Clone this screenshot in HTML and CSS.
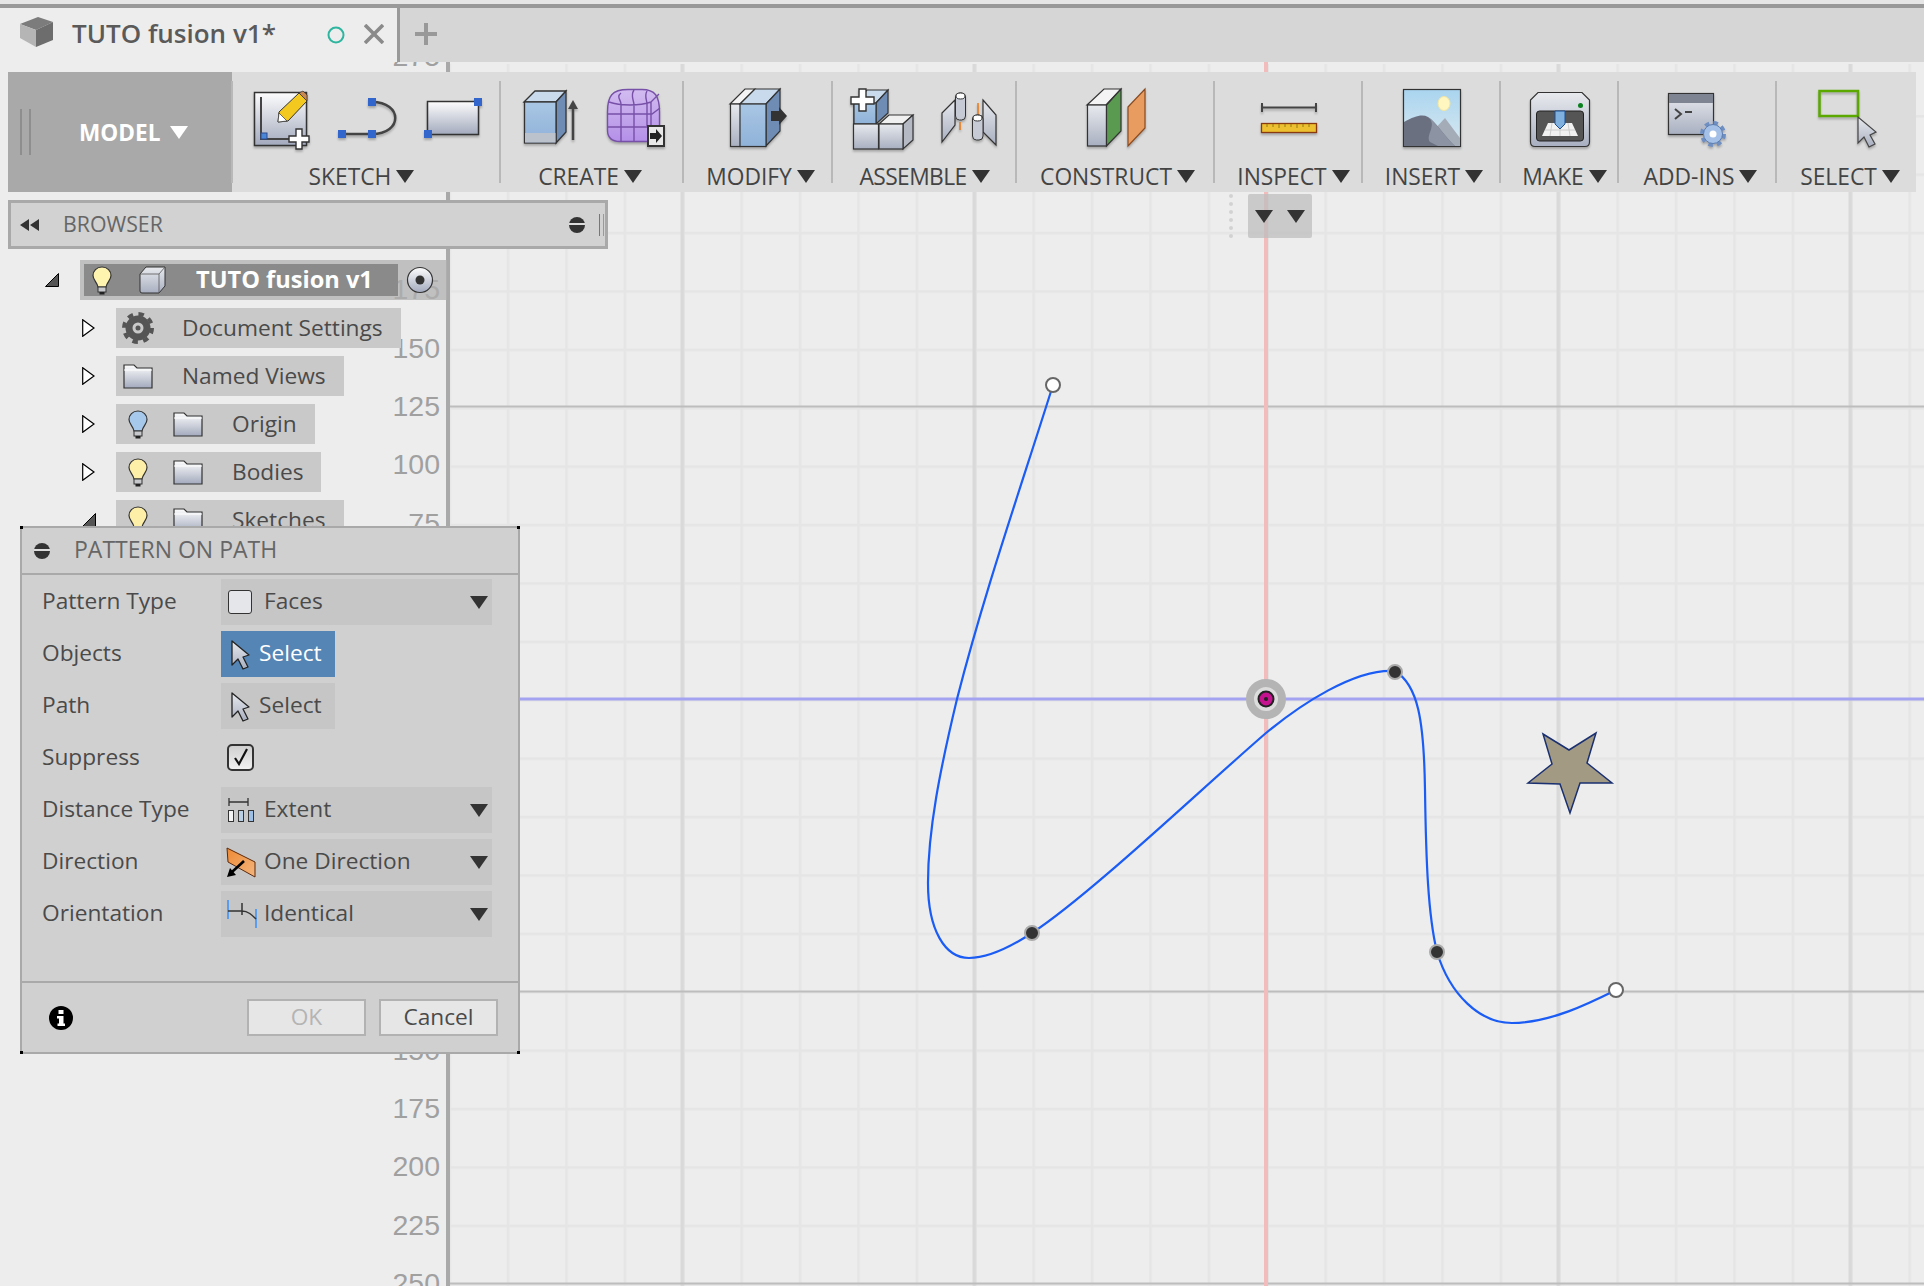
FILE: index.html
```html
<!DOCTYPE html>
<html lang="en">
<head>
<meta charset="utf-8">
<title>TUTO fusion v1</title>
<link rel="stylesheet" href="styles.css">
</head>
<body>
<div class="app">
  <header class="tabbar">
    <div class="tab">
      <svg class="tab-cube" width="34" height="32" viewBox="20 14 34 32"><polygon points="20,22 38,15 53,20 36,28" fill="#7c7c7c"/><polygon points="20,22 36,28 36,45 20,36" fill="#b5b5b5"/><polygon points="36,28 53,20 53,38 36,45" fill="#6d6d6d"/></svg>
      <span class="tab-title">TUTO fusion v1*</span>
      <svg class="tab-status" width="20" height="20" viewBox="0 0 20 20"><circle cx="10" cy="10" r="7.5" fill="none" stroke="#2db59f" stroke-width="2"/></svg>
      <svg class="tab-close" width="20" height="20" viewBox="0 0 20 20"><path d="M1 1L19 19M19 1L1 19" stroke="#8a8a8a" stroke-width="3.6"/></svg>
    </div>
    <svg class="tab-plus" width="24" height="24" viewBox="0 0 24 24"><path d="M12 1V23M1 12H23" stroke="#999" stroke-width="4"/></svg>
  </header>

  <main class="workspace">
    <svg class="canvas" width="1924" height="1224" viewBox="0 62 1924 1224">
      <defs>
        <linearGradient id="sheet" x1="0" y1="0" x2="0" y2="1"><stop offset="0" stop-color="#fdfdfd"/><stop offset="1" stop-color="#a3aabd"/></linearGradient>
        <linearGradient id="steel" x1="0" y1="0" x2="0" y2="1"><stop offset="0" stop-color="#e8eaee"/><stop offset="1" stop-color="#a8afc0"/></linearGradient>
        <linearGradient id="blue" x1="0" y1="0" x2="0" y2="1"><stop offset="0" stop-color="#a9c6e4"/><stop offset="1" stop-color="#8fb2d8"/></linearGradient>
        <linearGradient id="sky" x1="0" y1="0" x2="0" y2="1"><stop offset="0" stop-color="#a9d4ef"/><stop offset="1" stop-color="#dbeaf0"/></linearGradient>
        <linearGradient id="orange" x1="0" y1="0" x2="1" y2="1"><stop offset="0" stop-color="#ee8a34"/><stop offset="1" stop-color="#f3b57e"/></linearGradient>
        <linearGradient id="purple" x1="0" y1="0" x2="0" y2="1"><stop offset="0" stop-color="#d2bcf0"/><stop offset="1" stop-color="#b490e8"/></linearGradient>
        <pattern id="minor" patternUnits="userSpaceOnUse" width="58.4" height="58.4" x="1266" y="699">
          <rect x="0" y="0" width="2.6" height="58.4" fill="#e5e5e5"/>
          <rect x="0" y="0" width="58.4" height="2.6" fill="#e5e5e5"/>
        </pattern>
        <pattern id="major-v" patternUnits="userSpaceOnUse" width="292" height="292" x="1264.5" y="699">
          <rect x="0" y="0" width="3.6" height="292" fill="#d9d9d9"/>
        </pattern>
        <symbol id="bulb" viewBox="0 0 20 29"><path d="M10 1C4.500 1 1 5 1 9.500C1 14 5 16 6 21H14C15 16 19 14 19 9.500C19 5 15.500 1 10 1Z" fill="currentColor" stroke="#333" stroke-width="1.200"/><rect x="6" y="21" width="8" height="5" fill="#c6c8cc" stroke="#333"/><rect x="7.500" y="26" width="5" height="2.500" fill="#222"/></symbol>
        <symbol id="folder" viewBox="0 0 30 26"><path d="M1 2H11L14 5H29V25H1Z" fill="url(#sheet)" stroke="#333" stroke-width="1.200"/><path d="M1 7H29" stroke="#fff"/></symbol>
        <symbol id="arrow" viewBox="0 0 20 30"><path d="M2 1V25L8 19L13 29L18 27L13 17L19 15Z" fill="url(#steel)" stroke="#222" stroke-width="1.300" stroke-linejoin="round"/></symbol>
      </defs>
      <rect width="1924" height="1224" y="62" fill="#ededed"/>
      <rect x="450" y="64" width="1474" height="1222" fill="url(#minor)"/>
      <rect x="450" y="64" width="1474" height="1222" fill="url(#major-v)"/>
      <path d="M450 406.500H1924M450 991.500H1924M450 1283.500H1924" stroke="#bdbdbd" stroke-width="1.800"/>
      <rect x="1264" y="62" width="4" height="1224" fill="#f2bcbc"/>
      <rect x="450" y="697.500" width="1474" height="3" fill="#a3a3f2"/>
      <rect x="446" y="62" width="4" height="1224" fill="#a9a9a9"/>
      <g class="ruler" text-anchor="end">
        <text x="440" y="66">275</text><text x="440" y="299">175</text><text x="440" y="358">150</text><text x="440" y="416">125</text><text x="440" y="474">100</text><text x="440" y="533">75</text><text x="440" y="1060">150</text><text x="440" y="1118">175</text><text x="440" y="1176">200</text><text x="440" y="1235">225</text><text x="440" y="1293">250</text>
      </g>
      <path d="M1053 385C1020 490 985 590 957 699C940 770 928 830 928 883C928 930 945 958 969 958C990 958 1012 946 1032 933C1090 895 1200 790 1266 733C1300 705 1355 668 1395 671C1418 685 1424 720 1425 790C1426 860 1428 915 1437 952C1450 995 1480 1023 1512 1023C1550 1023 1590 1003 1616 990" fill="none" stroke="#1b5cf5" stroke-width="2.200"/>
      <polygon points="1543,734 1569,750 1596,733 1587,763 1612,783 1580,783 1570,813 1560,784 1528,783 1552,764" fill="#a39a84" stroke="#1a3070" stroke-width="1.500"/>
      <circle cx="1053" cy="385" r="7" fill="#fff" stroke="#666" stroke-width="2"/>
      <circle cx="1616" cy="990" r="7" fill="#fff" stroke="#666" stroke-width="2"/>
      <g fill="#333" stroke="#aaa" stroke-width="2"><circle cx="1032" cy="933" r="7"/><circle cx="1395" cy="672" r="7"/><circle cx="1437" cy="952" r="7"/></g>
      <circle cx="1266" cy="699" r="16" fill="#dcdcdc" stroke="#b4b4b4" stroke-width="8"/>
      <circle cx="1266" cy="699" r="7.500" fill="#c5128f" stroke="#222" stroke-width="2"/>
      <circle cx="1266" cy="699" r="2" fill="#222"/>
    </svg>

    <section class="toolbar">
      <div class="model">
        <span class="grip"></span>
        <span class="model-label">MODEL</span>
        <span class="tri tri-white"></span>
      </div>

      <div class="group g-sketch">
        <div class="icons">
          <svg width="56" height="66" viewBox="253 84 56 66"><rect x="253.500" y="92.500" width="52" height="53" fill="url(#sheet)" stroke="#333" stroke-width="1.500"/><path d="M260 97V139H288" fill="none" stroke="#444" stroke-width="2"/><rect x="260" y="133" width="6" height="6" fill="#4a86d8" stroke="#2a4a90"/><polygon points="277,122 278,112 298,93 306,101 287,121" fill="#f4c91f" stroke="#333"/><polygon points="298,93 302,91 306,95 306,101" fill="#c98850" stroke="#333" stroke-width=".7"/><polygon points="277,122 278,113 286,121" fill="#fff" stroke="#333" stroke-width=".7"/><path d="M295 129h6v7h7v6h-7v7h-6v-7h-7v-6h7z" fill="#fff" stroke="#333" stroke-width="1.400"/></svg>
          <svg width="58" height="66" viewBox="337 84 58 66"><path d="M341 134H371C402 134 402 102 371 102" fill="none" stroke="#444" stroke-width="2.500"/><g fill="#3366cc"><rect x="337" y="130" width="8" height="8"/><rect x="367" y="130" width="8" height="8"/><rect x="367" y="98" width="8" height="8"/></g></svg>
          <svg width="58" height="66" viewBox="423 84 58 66"><rect x="426.500" y="101.500" width="51" height="33" fill="url(#sheet)" stroke="#333" stroke-width="1.500"/><g fill="#3366cc"><rect x="423" y="130" width="8" height="8"/><rect x="473" y="98" width="8" height="8"/></g></svg>
        </div>
        <div class="label"><span>SKETCH</span><i class="tri"></i></div>
      </div>

      <div class="group g-create">
        <div class="icons">
          <svg width="55" height="66" viewBox="523 84 55 66"><polygon points="523,102 534,91 565,91 555,102" fill="#c8daec" stroke="#333" stroke-width="1.300"/><polygon points="555,102 565,91 565,132 555,143" fill="#6e8cb4" stroke="#333" stroke-width="1.300"/><rect x="523.500" y="102" width="31.500" height="41" fill="url(#blue)" stroke="#333" stroke-width="1.300"/><rect x="524" y="133" width="30.500" height="9.500" fill="#bcc2cc"/><path d="M572 140V104" stroke="#444" stroke-width="2.500"/><polygon points="572,100 567,109 577,109" fill="#444"/></svg>
          <svg width="58" height="66" viewBox="607 84 58 66"><path d="M607.500 112C607.500 96 612 89.500 628 89.500H642C655 89.500 659.500 96 659.500 112V130C659.500 138 655 141.500 648 141.500H620C612 141.500 607.500 138 607.500 130Z" fill="url(#purple)" stroke="#7750a8" stroke-width="1.400"/><path d="M609 102C620 106 640 106 651 102L659 94M608 114H652L660 108M608 127H648M621 93C616 97 621 100 621 104V141M634 90C630 96 634 100 634 105V141M647 91C644 96 647 100 647 104V126M651 102V126" fill="none" stroke="#7750a8" stroke-width="1.400"/><rect x="648" y="126" width="16" height="20" fill="#e8e8e8" stroke="#333" stroke-width="2"/><path d="M650 133h6v-4l6 7-6 7v-4h-6z" fill="#222"/></svg>
        </div>
        <div class="label"><span>CREATE</span><i class="tri"></i></div>
      </div>

      <div class="group g-modify">
        <div class="icons">
          <svg width="57" height="66" viewBox="730 84 57 66"><polygon points="730,104 745,89 755,89 740,104" fill="#f4f4f4" stroke="#333" stroke-width="1.200"/><rect x="730.500" y="104" width="10" height="42.500" fill="url(#steel)" stroke="#333" stroke-width="1.200"/><polygon points="740,104 755,89 780,89 766,104" fill="#c8daec" stroke="#333" stroke-width="1.200"/><polygon points="766,104 780,89 780,131 766,146" fill="#6e8cb4" stroke="#333" stroke-width="1.200"/><rect x="740" y="104" width="26" height="42.500" fill="url(#blue)" stroke="#333" stroke-width="1.200"/><path d="M771 111h8v-4l8 9-8 9v-4h-8z" fill="#333"/></svg>
        </div>
        <div class="label"><span>MODIFY</span><i class="tri"></i></div>
      </div>

      <div class="group g-assemble">
        <div class="icons">
          <svg width="61" height="66" viewBox="851 84 61 66"><polygon points="853,124 853,103 866,90 887,90 875,103" fill="#c8daec" stroke="#333" stroke-width="1.200"/><polygon points="875,103 887,90 887,113 875,124" fill="#6e8cb4" stroke="#333" stroke-width="1.200"/><rect x="853" y="103" width="22" height="21" fill="url(#blue)" stroke="#333" stroke-width="1.200"/><rect x="852.500" y="124" width="25" height="25" fill="url(#steel)" stroke="#333" stroke-width="1.200"/><polygon points="878,124 888,115 912,115 902,124" fill="#f0f0f0" stroke="#333" stroke-width="1.200"/><polygon points="902,124 912,115 912,140 902,149" fill="#b4b9c4" stroke="#333" stroke-width="1.200"/><rect x="878" y="124" width="24" height="25" fill="url(#steel)" stroke="#333" stroke-width="1.200"/><path d="M858 89h7v8h8v7h-8v7h-7v-7h-8v-7h8z" fill="#fff" stroke="#333" stroke-width="1.400"/></svg>
          <svg width="56" height="66" viewBox="940 84 56 66"><polygon points="941,113 954,100 954,125 941,142" fill="url(#steel)" stroke="#333" stroke-width="1.200"/><rect x="954.500" y="93" width="10" height="27" rx="4" fill="#c5cad4" stroke="#333"/><ellipse cx="959.500" cy="96" rx="4.500" ry="3" fill="#fff" stroke="#333"/><path d="M959 122V130M977 103V116" stroke="#ee7a10" stroke-width="1.500"/><polygon points="982,100 995,115 995,145 982,132" fill="url(#steel)" stroke="#333" stroke-width="1.200"/><rect x="971.500" y="115" width="10.500" height="25" rx="4" fill="#c5cad4" stroke="#333"/><ellipse cx="976.500" cy="118" rx="4.500" ry="3" fill="#fff" stroke="#333"/></svg>
        </div>
        <div class="label"><span>ASSEMBLE</span><i class="tri"></i></div>
      </div>

      <div class="group g-construct">
        <div class="icons">
          <svg width="58" height="66" viewBox="1087 84 58 66"><polygon points="1087,105 1104,89 1121,89 1106,105" fill="#f4f4f4" stroke="#333" stroke-width="1.200"/><rect x="1087.500" y="105" width="19" height="41" fill="url(#steel)" stroke="#333" stroke-width="1.200"/><polygon points="1106.500,105 1121,89 1121,131 1106.500,146" fill="#5a9a50" stroke="#333" stroke-width="1.200"/><polygon points="1128,107 1145,89 1145,128 1128,146" fill="#e89c60" stroke="#8a4a20" stroke-width="1.200"/></svg>
        </div>
        <div class="label"><span>CONSTRUCT</span><i class="tri"></i></div>
      </div>

      <div class="group g-inspect">
        <div class="icons">
          <svg width="56" height="66" viewBox="1260 84 56 66"><path d="M1261 103V112M1315 103V112M1261 107.500H1315" fill="none" stroke="#444" stroke-width="2"/><rect x="1260.500" y="123.500" width="55" height="9" fill="#ecc030" stroke="#8a3a10" stroke-width="1.300"/><path d="M1266 124v3M1272 124v3M1278 124v4M1284 124v3M1290 124v3M1296 124v4M1302 124v3M1308 124v3" stroke="#9a7a10"/></svg>
        </div>
        <div class="label"><span>INSPECT</span><i class="tri"></i></div>
      </div>

      <div class="group g-insert">
        <div class="icons">
          <svg width="58" height="66" viewBox="1403 84 58 66"><rect x="1403.500" y="89.500" width="57" height="57" fill="url(#sky)" stroke="#333" stroke-width="1.200"/><ellipse cx="1444" cy="103.500" rx="6" ry="7" fill="#fff6c0" stroke="#f2e6a0"/><polygon points="1432,132 1445,118 1460,138 1460,146 1440,146" fill="#a4acb8"/><path d="M1404 122C1415 116 1422 114 1428 117C1436 122 1446 138 1455 146H1404Z" fill="#6a7080"/><path d="M1428 117C1438 125 1425 135 1430 142L1438 146H1455C1446 138 1436 122 1428 117Z" fill="#8c93a2"/></svg>
        </div>
        <div class="label"><span>INSERT</span><i class="tri"></i></div>
      </div>

      <div class="group g-make">
        <div class="icons">
          <svg width="60" height="66" viewBox="1530 84 60 66"><path d="M1538 92.500H1582L1589.500 100V142Q1589.500 146.500 1585 146.500H1535Q1530.500 146.500 1530.500 142V100Z" fill="url(#steel)" stroke="#333" stroke-width="1.200"/><rect x="1536.500" y="111" width="47" height="30" rx="3" fill="#555" stroke="#222"/><polygon points="1548,123 1572,123 1578,136 1542,136" fill="#f2f2f2"/><path d="M1545 130H1575M1552 123L1550 136M1560 123V136M1568 123L1570 136" stroke="#ccc"/><path d="M1555 111H1565V124L1560 129L1555 124Z" fill="#7fb0de" stroke="#1f4f90"/><circle cx="1580.500" cy="105.500" r="2.500" fill="#0a8020"/></svg>
        </div>
        <div class="label"><span>MAKE</span><i class="tri"></i></div>
      </div>

      <div class="group g-addins">
        <div class="icons">
          <svg width="59" height="66" viewBox="1669 84 59 66"><rect x="1669.500" y="93.500" width="45" height="41" fill="url(#steel)" stroke="#333" stroke-width="1.200"/><rect x="1670" y="94" width="44" height="9" fill="#7f8492"/><path d="M1676 109L1682 114L1676 119M1686 112H1693" fill="none" stroke="#444" stroke-width="2"/><circle cx="1714" cy="134" r="10.500" fill="none" stroke="#6f8fc2" stroke-width="5" stroke-dasharray="4.300 3.950"/><circle cx="1714" cy="134" r="9.500" fill="#a4c0e6" stroke="#5a7cb0" stroke-width="1"/><circle cx="1714" cy="134" r="3.500" fill="#fff"/></svg>
        </div>
        <div class="label"><span>ADD-INS</span><i class="tri"></i></div>
      </div>

      <div class="group g-select">
        <div class="icons">
          <svg width="58" height="66" viewBox="1817 84 58 66"><rect x="1818.500" y="91" width="38.500" height="25" fill="none" stroke="#5aa800" stroke-width="2.500"/><path d="M1857 117V143L1863 137L1868 147L1874 144L1869 135L1875 132Z" fill="url(#steel)" stroke="#444" stroke-width="1.200"/></svg>
        </div>
        <div class="label"><span>SELECT</span><i class="tri"></i></div>
      </div>
    </section>

    <div class="mini">
      <span class="mini-grip"></span>
      <div class="mini-box"><i class="tri"></i><i class="tri"></i></div>
    </div>

    <section class="browser">
      <svg width="19" height="12" viewBox="0 0 19 12"><path d="M9 0V12L0 6ZM19 0V12L10 6Z" fill="#333"/></svg>
      <span class="browser-title">BROWSER</span>
      <span class="minus"></span>
      <span class="browser-grip"></span>
    </section>

    <nav class="tree">
      <div class="row lvl0">
        <svg class="exp" width="14" height="14" viewBox="0 0 14 14"><polygon points="13.500,0.500 13.500,13.500 0.500,13.500" fill="#555" stroke="#000"/></svg>
        <div class="root">
          <div class="root-inner">
            <svg class="bulb" width="20" height="29" color="#fff3b0"><use href="#bulb"/></svg>
            <svg width="27" height="28" viewBox="139 264 27 28"><path d="M140 272L146 265H165V284L159 291H142Q140 291 140 289Z" fill="url(#steel)" stroke="#333"/><path d="M140 272H159V291M159 272L165 265" fill="none" stroke="#555" stroke-width=".8"/></svg>
            <span class="root-text">TUTO fusion v1</span>
          </div>
          <svg class="radio" width="28" height="28" viewBox="0 0 28 28"><circle cx="14" cy="14" r="12.500" fill="url(#sheet)" stroke="#333" stroke-width="1.200"/><circle cx="14" cy="14" r="4.500" fill="#333"/></svg>
        </div>
      </div>
      <div class="row lvl1">
        <svg class="exp" width="13" height="18" viewBox="0 0 13 18"><polygon points="0.700,0.700 12,9 0.700,17.300" fill="#fff" stroke="#000" stroke-width="1.200"/></svg>
        <div class="pill pill-doc">
          <svg class="gear" width="32" height="32" viewBox="0 0 32 32"><circle cx="16" cy="16" r="14" fill="none" stroke="#555" stroke-width="4" stroke-dasharray="5.500 5.500"/><circle cx="16" cy="16" r="9" fill="none" stroke="#555" stroke-width="7"/><circle cx="16" cy="16" r="2.500" fill="#555"/></svg>
          <span>Document Settings</span>
        </div>
      </div>
      <div class="row lvl1">
        <svg class="exp" width="13" height="18" viewBox="0 0 13 18"><polygon points="0.700,0.700 12,9 0.700,17.300" fill="#fff" stroke="#000" stroke-width="1.200"/></svg>
        <div class="pill pill-named">
          <svg class="folder" width="30" height="26"><use href="#folder"/></svg>
          <span>Named Views</span>
        </div>
      </div>
      <div class="row lvl1">
        <svg class="exp" width="13" height="18" viewBox="0 0 13 18"><polygon points="0.700,0.700 12,9 0.700,17.300" fill="#fff" stroke="#000" stroke-width="1.200"/></svg>
        <div class="pill pill-vis pill-origin">
          <svg class="bulb" width="20" height="29" color="#a6c8ea"><use href="#bulb"/></svg>
          <svg class="folder" width="30" height="26"><use href="#folder"/></svg>
          <span>Origin</span>
        </div>
      </div>
      <div class="row lvl1">
        <svg class="exp" width="13" height="18" viewBox="0 0 13 18"><polygon points="0.700,0.700 12,9 0.700,17.300" fill="#fff" stroke="#000" stroke-width="1.200"/></svg>
        <div class="pill pill-vis pill-bodies">
          <svg class="bulb" width="20" height="29" color="#fdeea8"><use href="#bulb"/></svg>
          <svg class="folder" width="30" height="26"><use href="#folder"/></svg>
          <span>Bodies</span>
        </div>
      </div>
      <div class="row lvl1">
        <svg class="exp" width="14" height="14" viewBox="0 0 14 14"><polygon points="13.500,0.500 13.500,13.500 0.500,13.500" fill="#555" stroke="#000"/></svg>
        <div class="pill pill-vis pill-sketches">
          <svg class="bulb" width="20" height="29" color="#fdeea8"><use href="#bulb"/></svg>
          <svg class="folder" width="30" height="26"><use href="#folder"/></svg>
          <span>Sketches</span>
        </div>
      </div>
    </nav>

    <section class="dialog">
      <i class="dot dot-tl"></i><i class="dot dot-tr"></i><i class="dot dot-bl"></i><i class="dot dot-br"></i>
      <header class="dialog-head">
        <span class="minus"></span>
        <span class="dialog-title">PATTERN ON PATH</span>
      </header>
      <div class="dialog-body">
        <div class="field">
          <label>Pattern Type</label>
          <div class="box box-wide">
            <span class="faces"></span><span>Faces</span><i class="tri"></i>
          </div>
        </div>
        <div class="field">
          <label>Objects</label>
          <div class="box box-btn box-active">
            <svg width="20" height="30"><use href="#arrow"/></svg><span>Select</span>
          </div>
        </div>
        <div class="field">
          <label>Path</label>
          <div class="box box-btn">
            <svg width="20" height="30"><use href="#arrow"/></svg><span>Select</span>
          </div>
        </div>
        <div class="field">
          <label>Suppress</label>
          <span class="check"><svg width="18" height="18" viewBox="0 0 18 18"><path d="M3 10L7 16L15 1" fill="none" stroke="#111" stroke-width="2.200"/></svg></span>
        </div>
        <div class="field">
          <label>Distance Type</label>
          <div class="box box-wide">
            <svg class="opt" width="30" height="28" viewBox="226 796 30 28"><path d="M228 798V806M247 798V806M228 802H247" fill="none" stroke="#333" stroke-width="1.300"/><rect x="227.500" y="810.500" width="5" height="11" fill="#f4f4f4" stroke="#333"/><rect x="237.500" y="810.500" width="5" height="11" fill="#b9cfe6" stroke="#333"/><rect x="247.500" y="810.500" width="5" height="11" fill="#9dbfe6" stroke="#333"/></svg>
            <span>Extent</span><i class="tri"></i>
          </div>
        </div>
        <div class="field">
          <label>Direction</label>
          <div class="box box-wide">
            <svg class="opt" width="30" height="32" viewBox="226 846 30 32"><polygon points="226,848 254,862 254,877 227,862" fill="url(#orange)" stroke="#5a2a10" stroke-width="1"/><path d="M243 861L231 872" stroke="#000" stroke-width="2.600"/><polygon points="226,877 235,875 229,868" fill="#000"/></svg>
            <span>One Direction</span><i class="tri"></i>
          </div>
        </div>
        <div class="field">
          <label>Orientation</label>
          <div class="box box-wide">
            <svg class="opt" width="30" height="30" viewBox="225 899 30 30"><path d="M226 900V919M254 909V928" stroke="#5a9cf0" stroke-width="2"/><path d="M226 911H240C246 911 250 915 254 919M240 903V915" fill="none" stroke="#333" stroke-width="1.500"/></svg>
            <span>Identical</span><i class="tri"></i>
          </div>
        </div>
      </div>
      <footer class="dialog-foot">
        <svg width="24" height="24" viewBox="0 0 24 24"><circle cx="12" cy="12" r="12" fill="#000"/><rect x="9.500" y="4" width="5" height="4" fill="#fff"/><path d="M8 10H14.500V17.500H16V20H8.500V17.500H10V12.500H8Z" fill="#fff"/></svg>
        <button class="btn btn-off" type="button">OK</button>
        <button class="btn" type="button">Cancel</button>
      </footer>
    </section>
  </main>
</div>
</body>
</html>
```

FILE: styles.css
```css
* { box-sizing: border-box; }
html, body { margin: 0; padding: 0; background: #ededed; }
body { font-family: "Open Sans", "Liberation Sans", sans-serif; color: #4a4a4a; }

.app { width: 1924px; height: 1286px; overflow: hidden; display: flex; flex-direction: column; }

/* tab bar */
.tabbar { height: 62px; padding-top: 4px; display: flex; align-items: stretch; background: #d6d6d6; position: relative; z-index: 2; box-shadow: inset 0 4px 0 #e6e6e6; }
.tabbar::before { content: ""; position: absolute; left: 0; right: 0; top: 4px; height: 4px; background: #999; }
.tab { width: 400px; margin-top: 4px; background: #ededed; border-right: 3px solid #999; display: flex; align-items: center; padding-left: 20px; }
.tab-cube { margin-top: -6px; flex: none; }
.tab-title { margin: -4px 0 0 18px; width: 254px; font-size: 26px; font-weight: 600; color: #5a5a5a; white-space: nowrap; }
.tab-status { flex: none; margin-left: 0; }
.tab-close { flex: none; margin-left: 18px; margin-top: -2px; }
.tab-plus { margin: 18px 0 0 14px; }

/* canvas */
.workspace { position: relative; flex: 1; }
.canvas { display: block; }
.ruler text { font-family: "Liberation Sans", sans-serif; font-size: 28.500px; fill: #a0a0a0; }

/* shared dropdown triangle */
.tri { display: inline-block; width: 0; height: 0; border-left: 9px solid transparent; border-right: 9px solid transparent; border-top: 13px solid #333; flex: none; }
.tri-white { border-top-color: #fff; }

/* toolbar */
.toolbar { position: absolute; left: 8px; top: 10px; width: 1908px; height: 120px; background: #dcdcdc; display: grid; grid-template-columns: 224px 268px 183px 149px 184px 198px 148px 138px 118px 158px 140px; }
.model { background: #a9a9a9; display: flex; align-items: center; padding-left: 12px; color: #fff; }
.grip { width: 11px; height: 46px; border-left: 2px solid #8e8e8e; border-right: 2px solid #8e8e8e; }
.model-label { margin-left: 48px; font-size: 22.600px; font-weight: 700; width: 91px; }
.group { margin: 9px 0 9px -1px; height: 102px; border-left: 2px solid #b8b8b8; display: flex; flex-direction: column; align-items: center; }
.icons { display: flex; gap: 28px; height: 66px; margin-top: 3px; justify-content: center; }
.icons svg { display: block; overflow: visible; flex: none; filter: drop-shadow(0 2px 1px rgba(0, 0, 0, 0.25)); }
.label { display: flex; align-items: center; gap: 5px; margin-top: 14px; height: 24px; font-size: 22.800px; color: #444; white-space: nowrap; }
.g-sketch .icons { padding-left: 2px; }
.g-sketch .label { padding-right: 10px; }
.g-create .icons { padding-left: 4px; }
.g-create .label { padding-right: 4px; }
.g-modify .label { padding-left: 5px; }
.g-assemble .label span { letter-spacing: -0.600px; }
.g-construct .label { padding-left: 4px; }
.g-inspect .label { padding-left: 10px; }
.g-insert .label { padding-left: 5px; }
.g-make .label { padding-left: 10px; }
.g-addins .label { padding-left: 6px; }
.g-select .label { padding-left: 7px; }

/* small floating control */
.mini { position: absolute; left: 1229px; top: 132px; height: 44px; display: flex; }
.mini-grip { width: 5px; border-left: 4px dotted #d2d2d2; }
.mini-box { margin-left: 14px; width: 64px; background: rgba(190, 190, 190, 0.75); border-radius: 2px; display: flex; align-items: center; justify-content: center; gap: 14px; }

/* browser panel */
.browser { position: absolute; left: 8px; top: 138px; width: 600px; height: 49px; background: #d2d2d2; border: 3px solid #a9a9a9; display: flex; align-items: center; padding-left: 9px; }
.browser-title { margin: -2px 0 0 24px; font-size: 21.300px; color: #666; }
.minus { display: block; width: 16px; height: 16px; border-radius: 50%; background: linear-gradient(#333 0 6px, #ddd 6px 8px, #333 8px); flex: none; }
.browser .minus { margin-left: auto; }
.browser-grip { width: 5px; height: 22px; margin: 0 1px 0 14px; border-left: 1px solid #777; border-right: 1px solid #999; }

/* tree */
.tree { position: absolute; left: 0; top: 198px; display: flex; flex-direction: column; gap: 8px; }
.row { display: flex; align-items: center; height: 40px; }
.lvl0 { margin-left: 45px; }
.lvl1 { margin-left: 82px; }
.exp { flex: none; }
.lvl0 .exp { margin-right: 21px; }
.lvl1 .exp { margin-right: 21px; }
.lvl1 .exp[width="14"] { margin-right: 20px; }
.root { width: 367px; height: 40px; padding-left: 4px; background: rgba(176, 176, 176, 0.75); display: flex; align-items: center; }
.root-inner { width: 314px; height: 32px; background: #8a8a8a; display: flex; align-items: center; padding-left: 8px; }
.root-inner > svg:nth-child(2) { margin-left: 27px; }
.root-text { margin: -2px 0 0 30px; color: #fff; font-weight: 700; font-size: 23.600px; }
.radio { margin-left: 8px; }
.pill { height: 40px; background: #c9c9c9; display: flex; align-items: center; font-size: 22.700px; padding-right: 18px; white-space: nowrap; }
.pill span { margin-top: -2px; }
.gear { margin-left: 6px; margin-right: 28px; }
.folder { margin-left: 7px; margin-right: 29px; }
.pill-vis .bulb { margin-left: 12px; }
.pill-vis .folder { margin-left: 25px; }

/* dialog */
.dialog { position: absolute; left: 20px; top: 464px; width: 500px; height: 528px; background: #d0d0d0; border: 2px solid #a9a9a9; display: flex; flex-direction: column; z-index: 1; }
.dot { position: absolute; width: 3px; height: 3px; background: #000; }
.dot-tl { left: -2px; top: -2px; }
.dot-tr { right: -2px; top: -2px; }
.dot-bl { left: -2px; bottom: -2px; }
.dot-br { right: -2px; bottom: -2px; }
.dialog-head { height: 47px; border-bottom: 2px solid #a9a9a9; display: flex; align-items: center; padding-left: 12px; flex: none; }
.dialog-title { margin: -3px 0 0 24px; font-size: 23px; color: #666; }
.dialog-body { flex: 1; padding-top: 4px; display: flex; flex-direction: column; gap: 6px; }
.field { height: 46px; display: flex; align-items: center; padding-left: 20px; font-size: 22.700px; }
.field label { width: 179px; flex: none; margin-top: -3px; }
.box { height: 46px; background: #c6c6c6; display: flex; align-items: center; padding-left: 6px; }
.box > span:not(.faces) { margin-top: -3px; }
.box-wide { width: 271px; }
.box-wide .tri { margin-left: auto; margin-right: 4px; }
.box-btn { width: 114px; }
.box-btn svg { margin: 2px 9px 0 3px; }
.box-active { background: #5585b5; color: #fff; }
.faces { width: 24px; height: 24px; margin: 0 12px 0 1px; border: 1.500px solid #333; border-radius: 3px; background: #e4e6ea; }
.opt { margin-right: 7px; flex: none; overflow: visible; }
.check { width: 27px; height: 27px; margin: -2px 0 0 6px; border: 2px solid #333; border-radius: 5px; background: linear-gradient(#d0d0d0, #f0f0f0); display: flex; align-items: center; justify-content: center; }
.dialog-foot { height: 71px; flex: none; border-top: 2px solid #a9a9a9; display: flex; align-items: center; padding-left: 27px; }
.btn { width: 119px; height: 37px; padding: 0 0 3px; background: #e6e6e6; border: 2px solid #b2b2b2; font: 22.700px "Open Sans", "Liberation Sans", sans-serif; color: #4a4a4a; margin: -1px 0 0 13px; }
.btn-off { margin-left: 174px; color: #b4b4b4; }
```
